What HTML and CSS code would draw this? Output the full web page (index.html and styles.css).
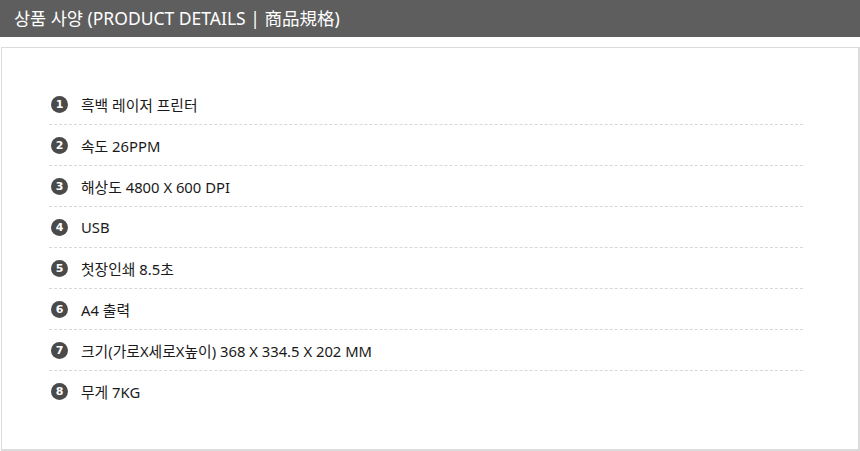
FILE: index.html
```html
<!DOCTYPE html>
<html lang="ko">
<head>
<meta charset="utf-8">
<link rel="stylesheet" href="styles.css">
</head>
<body>
<div class="header">상품 사양 (PRODUCT DETAILS | 商品規格)</div>
<div class="box">
  <ul class="specs">
    <li><span class="num">1</span>흑백 레이저 프린터</li>
    <li><span class="num">2</span>속도 26PPM</li>
    <li><span class="num">3</span>해상도 4800 X 600 DPI</li>
    <li><span class="num">4</span>USB</li>
    <li><span class="num">5</span>첫장인쇄 8.5초</li>
    <li><span class="num">6</span>A4 출력</li>
    <li><span class="num">7</span>크기(가로X세로X높이) 368 X 334.5 X 202 MM</li>
    <li class="last"><span class="num">8</span>무게 7KG</li>
  </ul>
</div>
</body>
</html>
```

FILE: styles.css
```css
html, body {
  margin: 0;
  padding: 0;
  background: #fff;
}
body {
  width: 860px;
  height: 451px;
  overflow: hidden;
  font-family: "Noto Sans", "Noto Sans CJK KR", sans-serif;
  color: #1a1a1a;
}
.header {
  height: 37px;
  line-height: 36px;
  background: #5e5e5e;
  color: #fff;
  font-size: 17.5px;
  padding-left: 14px;
  box-sizing: border-box;
}
.box {
  margin: 10px 0 0 1px;
  width: 859px;
  height: 404px;
  box-sizing: border-box;
  border: 1px solid #dcdcdc;
  border-right-width: 2px;
  border-bottom-width: 2px;
  padding: 36px 55px 0 47px;
}
.specs {
  list-style: none;
  margin: 0;
  padding: 0;
}
.specs li {
  display: flex;
  align-items: center;
  height: 41px;
  box-sizing: border-box;
  border-bottom: 1px dashed #d8d8d8;
  font-size: 14.8px;
  color: #1a1a1a;
  padding-left: 2px;
}
.specs li.last {
  border-bottom: none;
}
.num {
  display: inline-flex;
  align-items: center;
  justify-content: center;
  width: 17px;
  height: 17px;
  border-radius: 50%;
  background: #4a4a4a;
  color: #fff;
  font-family: "DejaVu Sans", sans-serif;
  font-weight: bold;
  font-size: 11px;
  margin-right: 13px;
  flex: none;
}
```
